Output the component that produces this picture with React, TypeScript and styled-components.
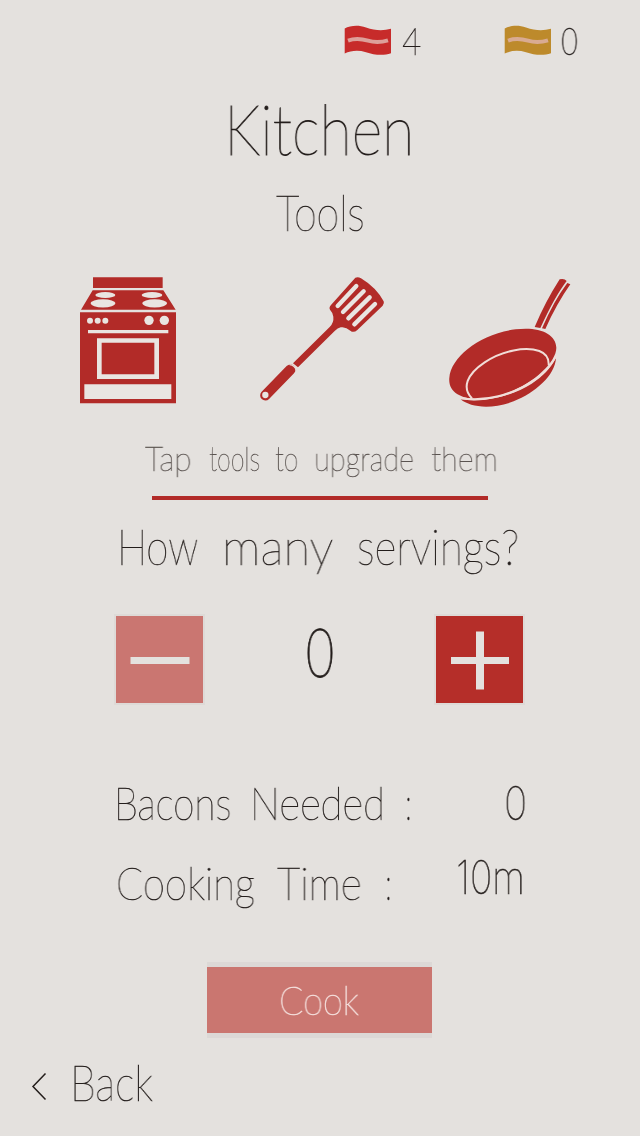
import React, { useLayoutEffect, useRef, useState } from 'react';
import styled, { createGlobalStyle } from 'styled-components';

const RED = '#b22b28';
const PAPER = '#e4e1de';
const INK = '#231d1b';

const GlobalStyle = createGlobalStyle`
  * { box-sizing: border-box; }
  body { margin: 0; background: ${PAPER}; }
`;

const Page = styled.main`
  display: flex;
  flex-direction: column;
  width: 640px;
  height: 1136px;
  overflow: hidden;
  background: ${PAPER};
  color: ${INK};
  font-family: Lato, 'Open Sans', sans-serif;
  font-weight: 100;
`;

const Line = styled.div<{ $size: number; $height: number; $left?: number; $top?: number; $color?: string; $stroke?: number }>`
  display: flex;
  flex: none;
  height: ${p => p.$height}px;
  margin-top: ${p => p.$top ?? 0}px;
  padding-left: ${p => p.$left ?? 0}px;
  font-size: ${p => p.$size}px;
  line-height: ${p => p.$height}px;
  color: ${p => p.$color ?? 'inherit'};
  -webkit-text-stroke: ${p => p.$stroke ?? 0.5}px currentColor;
`;

const WordBox = styled.span<{ $width: number; $gap: number; $raise: number }>`
  display: block;
  flex: none;
  width: ${p => p.$width}px;
  margin-left: ${p => p.$gap}px;
  margin-top: ${p => -p.$raise}px;
  white-space: nowrap;
`;

const WordText = styled.span<{ $digits?: boolean }>`
  display: inline-block;
  transform-origin: left center;
  will-change: transform;
  font-family: ${p => (p.$digits ? "Inter, Roboto, sans-serif" : 'inherit')};
`;

interface WordProps {
  children: string;
  width: number;
  gap?: number;
  raise?: number;
  digits?: boolean;
}

/* A word condensed or widened to fill the width it is given. */
function Word({ children, width, gap = 0, raise = 0, digits }: WordProps) {
  const ref = useRef<HTMLSpanElement>(null);
  const [scale, setScale] = useState(1);
  useLayoutEffect(() => {
    if (ref.current) setScale(width / ref.current.offsetWidth);
  }, [width, children]);
  return (
    <WordBox $width={width} $gap={gap} $raise={raise}>
      <WordText ref={ref} $digits={digits} style={{ transform: `scaleX(${scale})` }}>{children}</WordText>
    </WordBox>
  );
}

const Header = styled.header`
  display: flex;
  flex: none;
  height: 84px;
  padding: 18px 0 0 344px;
`;

const Counter = styled.div<{ $width: number }>`
  display: flex;
  width: ${p => p.$width}px;
`;

const FlagIcon = styled.svg`
  flex: none;
  width: 48px;
  height: 32px;
  margin-top: 7px;
`;

function Flag({ color, stripe }: { color: string; stripe: string }) {
  return (
    <FlagIcon viewBox="0 0 48 32">
      <path fill={color} d="M.7 3.600C6 .8 14 -.4 22 2.600c9 3 17 3.400 25 1.200v24.500c-8 2.600-17 1.600-25-1.100-8-2.300-15-1.600-21.300 1.400z" />
      <path fill="none" stroke={stripe} strokeWidth="4" d="M4 15.700c7-2.600 13-2 20 0 7 2 13 1.800 20-.4" />
    </FlagIcon>
  );
}

const ToolRow = styled.section`
  display: flex;
  flex: none;
  height: 140px;
  margin-top: 28px;
  padding-left: 70px;
`;

const ToolIcon = styled.svg<{ $gap?: number; $width: number }>`
  flex: none;
  width: ${p => p.$width}px;
  height: 150px;
  margin-top: -5px;
  margin-left: ${p => p.$gap ?? 0}px;
`;

const Stove = () => (
  <ToolIcon $width={120} viewBox="0 0 360 450">
    <g fill={RED}>
      <path d="M69 37H278V69H69zM68 76H280L317 134H33z" />
      <path d="M30 142H318V415H30z" />
    </g>
    <g fill="#e9e5e1">
      <ellipse cx="106" cy="90" rx="30" ry="9" />
      <ellipse cx="246" cy="90" rx="31" ry="9" />
      <ellipse cx="99" cy="115" rx="37" ry="12.500" />
      <ellipse cx="254" cy="115" rx="37" ry="12.500" />
      <circle cx="60" cy="167" r="9" />
      <circle cx="83" cy="167" r="9" />
      <circle cx="106" cy="167" r="9" />
      <circle cx="237" cy="166" r="14" />
      <circle cx="283" cy="166" r="14" />
      <path d="M54 195H295V205H54zM43 358H304V402H43z" />
      <path fillRule="evenodd" d="M81 220H267V342H81zM95 233V328H253V233z" />
    </g>
  </ToolIcon>
);

const Spatula = () => (
  <ToolIcon $width={145} $gap={60} viewBox="0 0 435 450">
    <path fill={RED} d="M316 38Q324 34 333 40Q378 67 401 109Q404 116 398 122L322 195Q311 205 301 197Q287 184 272 187Q263 189 254 198L144 307L129 295L239 186Q252 173 250 155Q248 142 240 134Q236 128 243 120z" />
    <path fill="none" stroke={RED} strokeWidth="31" strokeLinecap="round" strokeLinejoin="round" d="M121 314L46 391" />
    <path fill="none" stroke="#e9d9d5" strokeWidth="4" d="M119 299Q135 301 139 317" />
    <circle cx="46" cy="390" r="9.500" fill="#e9e5e1" />
    <g stroke="#e9e5e1" strokeWidth="13" strokeLinecap="round">
      <path d="M319 63L263 123M341 79L279 141M359 97L295 160M375 117L313 178" />
    </g>
  </ToolIcon>
);

const Pan = () => (
  <ToolIcon $width={145} $gap={45} viewBox="0 0 435 450">
    <path fill={RED} d="M359 43Q373 39 380 48Q344 95 301 189L284 186Q316 110 359 43zM382 54L391 58Q350 116 316 192L306 190Q341 108 382 54z" />
    <path fill={RED} d="M28 338C33 276 119 207 227 193C295 184 348 205 349 248C349 295 270 365 181 391C96 416 22 397 28 338z" />
    <path fill={RED} d="M62 403C126 414 211 396 275 356Q324 325 348 279C345 332 285 383 221 409C156 434 91 428 62 403z" />
    <g fill="none" stroke="#f1ddd8" strokeWidth="6">
      <path d="M96 400C65 369 80 328 134 292C188 256 257 244 298 258Q328 269 326 301" />
      <path d="M60 399C134 412 217 391 286 343Q330 312 349 271" />
    </g>
  </ToolIcon>
);

const Divider = styled.hr`
  flex: none;
  width: 336px;
  height: 4px;
  margin: 17px 0 0 152px;
  border: 0;
  background: ${RED};
`;

const Stepper = styled.section`
  display: flex;
  flex: none;
  width: 407px;
  height: 87px;
  margin: 40px 0 0 116px;
`;

const StepButton = styled.button<{ $muted?: boolean }>`
  display: grid;
  place-items: center;
  flex: none;
  width: 87px;
  height: 87px;
  padding: 0;
  border: 0;
  background: ${p => (p.$muted ? '#ca7671' : '#b52e29')};
  box-shadow: 0 0 0 2px #dedad7;
`;

const StepIcon = styled.svg`
  width: 87px;
  height: 87px;
`;

const StepValue = styled.div`
  width: 233px;
`;

const CookButton = styled.button`
  flex: none;
  width: 225px;
  height: 66px;
  margin: 56px 0 0 207px;
  padding: 0;
  border: 0;
  background: #ca7670;
  box-shadow: 0 -5px 0 #dcd8d6, 0 5px 0 #dcd8d6;
  font: inherit;
  text-align: left;
`;

const BackLink = styled.nav`
  display: flex;
  flex: none;
  margin-top: 19px;
  padding-left: 30px;
`;

const Chevron = styled.svg`
  flex: none;
  width: 20px;
  height: 60px;
`;

export default function App() {
  return (
    <Page>
      <GlobalStyle />
      <Header>
        <Counter $width={160}>
          <Flag color="#c72b2a" stripe="#dda09a" />
          <Line $size={37} $height={45}><Word width={19} gap={10}>4</Word></Line>
        </Counter>
        <Counter $width={90}>
          <Flag color="#bd8a2b" stripe="#d9ab92" />
          <Line $size={37} $height={45}><Word width={19} gap={8} digits>0</Word></Line>
        </Counter>
      </Header>
      <Line $size={71} $height={86} $left={224} $top={1} $stroke={0.9}><Word width={190}>Kitchen</Word></Line>
      <Line $size={50} $height={60} $left={276} $top={11}><Word width={89}>Tools</Word></Line>
      <ToolRow>
        <Stove />
        <Spatula />
        <Pan />
      </ToolRow>
      <Line $size={34.5} $height={42} $left={145} $top={27} $color="#5a5350">
        <Word width={47}>Tap</Word>
        <Word width={51} gap={17}>tools</Word>
        <Word width={23} gap={15}>to</Word>
        <Word width={100} gap={16}>upgrade</Word>
        <Word width={67} gap={17}>them</Word>
      </Line>
      <Divider />
      <Line $size={50} $height={60} $left={117} $top={16}>
        <Word width={81}>How</Word>
        <Word width={111} gap={24}>many</Word>
        <Word width={162} gap={24}>servings?</Word>
      </Line>
      <Stepper>
        <StepButton $muted aria-label="Fewer servings">
          <StepIcon viewBox="0 0 87 87"><path fill="#e4e1de" d="M14.500 41H73.500V48H14.500z" /></StepIcon>
        </StepButton>
        <StepValue>
          <Line $size={66} $height={72} $left={101} $stroke={0.8}><Word width={32} digits>0</Word></Line>
        </StepValue>
        <StepButton aria-label="More servings">
          <StepIcon viewBox="0 0 87 87"><path fill="#e4e1de" d="M15 41H40V15.500H48V41H73V48H48V73.500H40V48H15z" /></StepIcon>
        </StepButton>
      </Stepper>
      <Line $size={46} $height={56} $left={114} $top={72}>
        <Word width={117}>Bacons</Word>
        <Word width={135} gap={19}>Needed</Word>
        <Word width={7} gap={20}>:</Word>
        <Word width={23} gap={92} digits>0</Word>
      </Line>
      <Line $size={46} $height={56} $left={116} $top={24}>
        <Word width={139}>Cooking</Word>
        <Word width={85} gap={22}>Time</Word>
        <Word width={7} gap={23}>:</Word>
        <Word width={69} gap={64} raise={6} digits>10m</Word>
      </Line>
      <CookButton>
        <Line $size={39} $height={66} $left={72} $color="#f4dfdc" $stroke={0.7}><Word width={80}>Cook</Word></Line>
      </CookButton>
      <BackLink>
        <Chevron viewBox="0 0 20 60"><path fill="none" stroke={INK} strokeWidth="1.500" d="M15.500 21.500L3 34.500L15.500 47.500" /></Chevron>
        <Line $size={50} $height={60}><Word width={83} gap={20}>Back</Word></Line>
      </BackLink>
    </Page>
  );
}
